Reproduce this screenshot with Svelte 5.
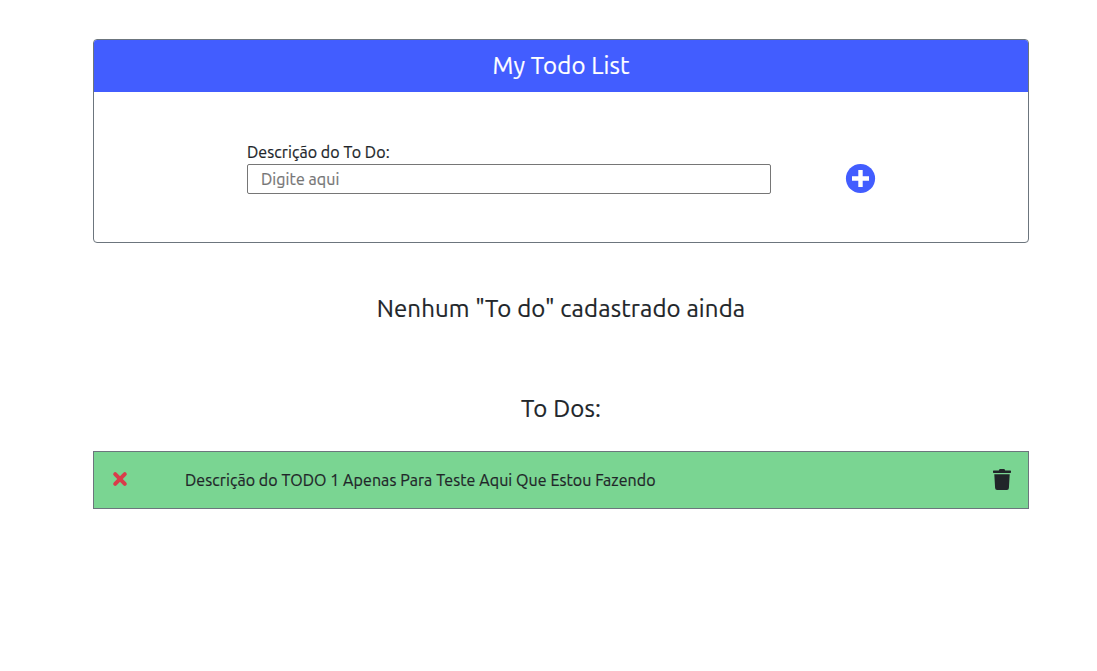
<script>
  let description = $state('');
  const todos = [
    { id: 1, text: 'Descrição do TODO 1 Apenas Para Teste Aqui Que Estou Fazendo' }
  ];
</script>

<main>
  <section class="card">
    <header>My Todo List</header>
    <form onsubmit={(e) => e.preventDefault()}>
      <div class="field">
        <label for="description">Descrição do To Do:</label>
        <input id="description" placeholder="Digite aqui" bind:value={description} />
      </div>
      <button class="add" aria-label="Adicionar">
        <svg width="30" height="30" viewBox="0 0 30 30">
          <circle cx="14.500" cy="14.500" r="14.600" fill="#425dff" />
          <path d="M12.300 6h4.400v6.300H23v4.400h-6.300V23h-4.400v-6.300H6v-4.400h6.300z" fill="#fff" />
        </svg>
      </button>
    </form>
  </section>

  <h2>Nenhum "To do" cadastrado ainda</h2>
  <h2 class="list-title">To Dos:</h2>

  {#each todos as todo (todo.id)}
    <div class="todo">
      <svg class="cross" width="14" height="14" viewBox="0 0 14 14">
        <path d="M2.200 2.200l9.600 9.600M11.800 2.200l-9.600 9.600" stroke="#d93c4a" stroke-width="4" stroke-linecap="round" />
      </svg>
      <p>{todo.text}</p>
      <svg class="trash" width="18" height="21" viewBox="0 0 18 21">
        <path d="M.6 1.400h5.200L6.400.3q.2-.3.600-.3h4q.4 0 .6.300l.6 1.100h5.200q.6 0 .6.600v1.300q0 .6-.6.600H.6Q0 3.900 0 3.300V2q0-.6.600-.6z" fill="#212529" />
        <path d="M1.300 5.200h15.400l-.8 13.900q-.1 1.900-2 1.900H4.100q-1.900 0-2-1.900z" fill="#212529" />
      </svg>
    </div>
  {/each}
</main>

<style>
  :global(body) {
    margin: 0;
    background: #fff;
  }

  main {
    box-sizing: border-box;
    padding: 39px 68px 0 93px;
    color: #212529;
    font: 400 16px/24px Ubuntu, "Noto Sans", sans-serif;
    letter-spacing: 0.075px;
    -webkit-text-stroke: 0.2px currentColor;
  }

  .card {
    box-sizing: border-box;
    height: 204px;
    border: 1px solid #6c757d;
    border-radius: 4px;
    overflow: hidden;
  }

  header {
    height: 52px;
    background: #425dff;
    color: #fff;
    font-size: 24px;
    letter-spacing: 0.13px;
    line-height: 52px;
    text-align: center;
  }

  form {
    display: flex;
    align-items: flex-end;
    padding: 48px 152px 0 153px;
  }

  .field {
    width: 524px;
    margin-right: 75px;
  }

  label {
    display: block;
    height: 24px;
  }

  input {
    display: block;
    box-sizing: border-box;
    width: 100%;
    height: 30px;
    padding: 1px 13px;
    border: 1px solid #767676;
    border-radius: 2px;
    outline: none;
    color: #212529;
    font: inherit;
    letter-spacing: inherit;
  }

  input::placeholder {
    color: #757575;
    opacity: 1;
  }

  .add {
    width: 30px;
    height: 30px;
    padding: 0;
    border: 0;
    background: none;
  }

  svg {
    display: block;
    flex: none;
    overflow: visible;
  }

  h2 {
    margin: 48px 0 0;
    font-size: 24px;
    font-weight: inherit;
    letter-spacing: 0.13px;
    line-height: 36px;
    text-align: center;
  }

  .list-title {
    margin: 64px 0 24px;
  }

  .todo {
    display: flex;
    align-items: center;
    box-sizing: border-box;
    height: 58px;
    padding: 0 17px 0 19px;
    border: 1px solid #6c757d;
    background: #7ad592;
  }

  .cross {
    margin-bottom: 2px;
  }

  .trash {
    margin-bottom: 1px;
  }

  p {
    flex: 1;
    margin: 0 0 0 58px;
    white-space: nowrap;
  }
</style>
